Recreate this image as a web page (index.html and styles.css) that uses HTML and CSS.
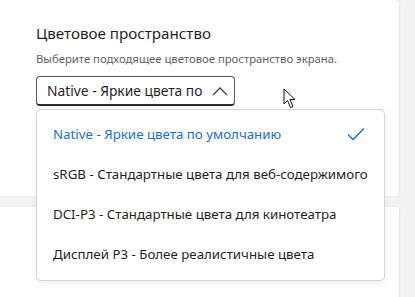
FILE: index.html
```html
<!DOCTYPE html>
<html lang="ru">

<head>
    <meta charset="UTF-8">
    <meta name="viewport" content="width=device-width, initial-scale=1.0">
    <title>Цветовое пространство</title>
    <link rel="stylesheet" href="styles.css">
</head>

<body>
    <div class="page">
        <div class="card card-top">
            <h2 class="title">Цветовое пространство</h2>
            <p class="caption">Выберите подходящее цветовое пространство экрана.</p>
            <div class="combo">
                <span class="combo-text">Native - Яркие цвета по</span>
                <svg class="chevron" width="16" height="10" viewBox="0 0 16 10">
                    <path d="M1 9 L8 2 L15 9" fill="none" stroke="#444" stroke-width="1.3" />
                </svg>
            </div>
        </div>
        <div class="card card-bottom"></div>

        <ul class="menu">
            <li class="menu-item selected">
                <span>Native - Яркие цвета по умолчанию</span>
                <svg class="check" width="18" height="15" viewBox="0 0 18 15">
                    <path d="M1 7.5 L6 12.5 L17 1.5" fill="none" stroke="#1a6fd8" stroke-width="1.4" />
                </svg>
            </li>
            <li class="menu-item">sRGB - Стандартные цвета для веб-содержимого</li>
            <li class="menu-item">DCI-P3 - Стандартные цвета для кинотеатра</li>
            <li class="menu-item">Дисплей P3 - Более реалистичные цвета</li>
        </ul>

        <svg class="cursor" width="14" height="21" viewBox="0 0 14 21">
            <path d="M1 1 L1 16 L4.5 12.5 L7.5 19.5 L10 18.5 L7 11.5 L12 11.5 Z" fill="#fff" stroke="#111" stroke-width="1" stroke-linejoin="round" />
        </svg>
    </div>
</body>

</html>
```

FILE: styles.css
```css
body {
    margin: 0;
    background: #f3f3f3;
    font-family: "Noto Sans", "Open Sans", sans-serif;
    color: #1f1f1f;
}

.page {
    position: relative;
    width: 415px;
    height: 297px;
    overflow: hidden;
}

.card {
    width: 399px;
    background: #fff;
    box-shadow: 1px 0 2px rgba(0, 0, 0, 0.06);
    border-radius: 0 4px 4px 0;
}

.card-top {
    height: 196px;
    padding: 23px 0 0 36px;
    box-sizing: border-box;
}

.card-bottom {
    margin-top: 11px;
    height: 100px;
}

.title {
    margin: 0;
    font-size: 15.2px;
    font-weight: normal;
    line-height: 20px;
}

.caption {
    margin: 8px 0 0;
    font-size: 11.3px;
    line-height: 15px;
    color: #5f5f5f;
}

.combo {
    margin-top: 10px;
    width: 199px;
    height: 30px;
    box-sizing: border-box;
    border: 1px solid #5a5a5a;
    border-bottom: 2px solid #2b2b2b;
    border-radius: 4px;
    display: flex;
    align-items: center;
    padding: 0 6px 0 10px;
    gap: 8px;
}

.combo-text {
    flex: 1;
    overflow: hidden;
    white-space: nowrap;
    font-size: 13.8px;
}

.chevron {
    flex: none;
}

.menu {
    position: absolute;
    left: 36px;
    top: 109px;
    width: 349px;
    height: 172px;
    box-sizing: border-box;
    margin: 0;
    padding: 4px 0;
    list-style: none;
    background: #fff;
    border: 1px solid #d6d6d6;
    border-radius: 5px;
    box-shadow: 0 2px 6px rgba(0, 0, 0, 0.08);
}

.menu-item {
    height: 40px;
    display: flex;
    align-items: center;
    justify-content: space-between;
    padding: 0 19px 0 16px;
    font-size: 13.3px;
    white-space: nowrap;
}

.menu-item.selected {
    color: #1a6fd8;
}

.cursor {
    position: absolute;
    left: 283px;
    top: 88px;
}
```
